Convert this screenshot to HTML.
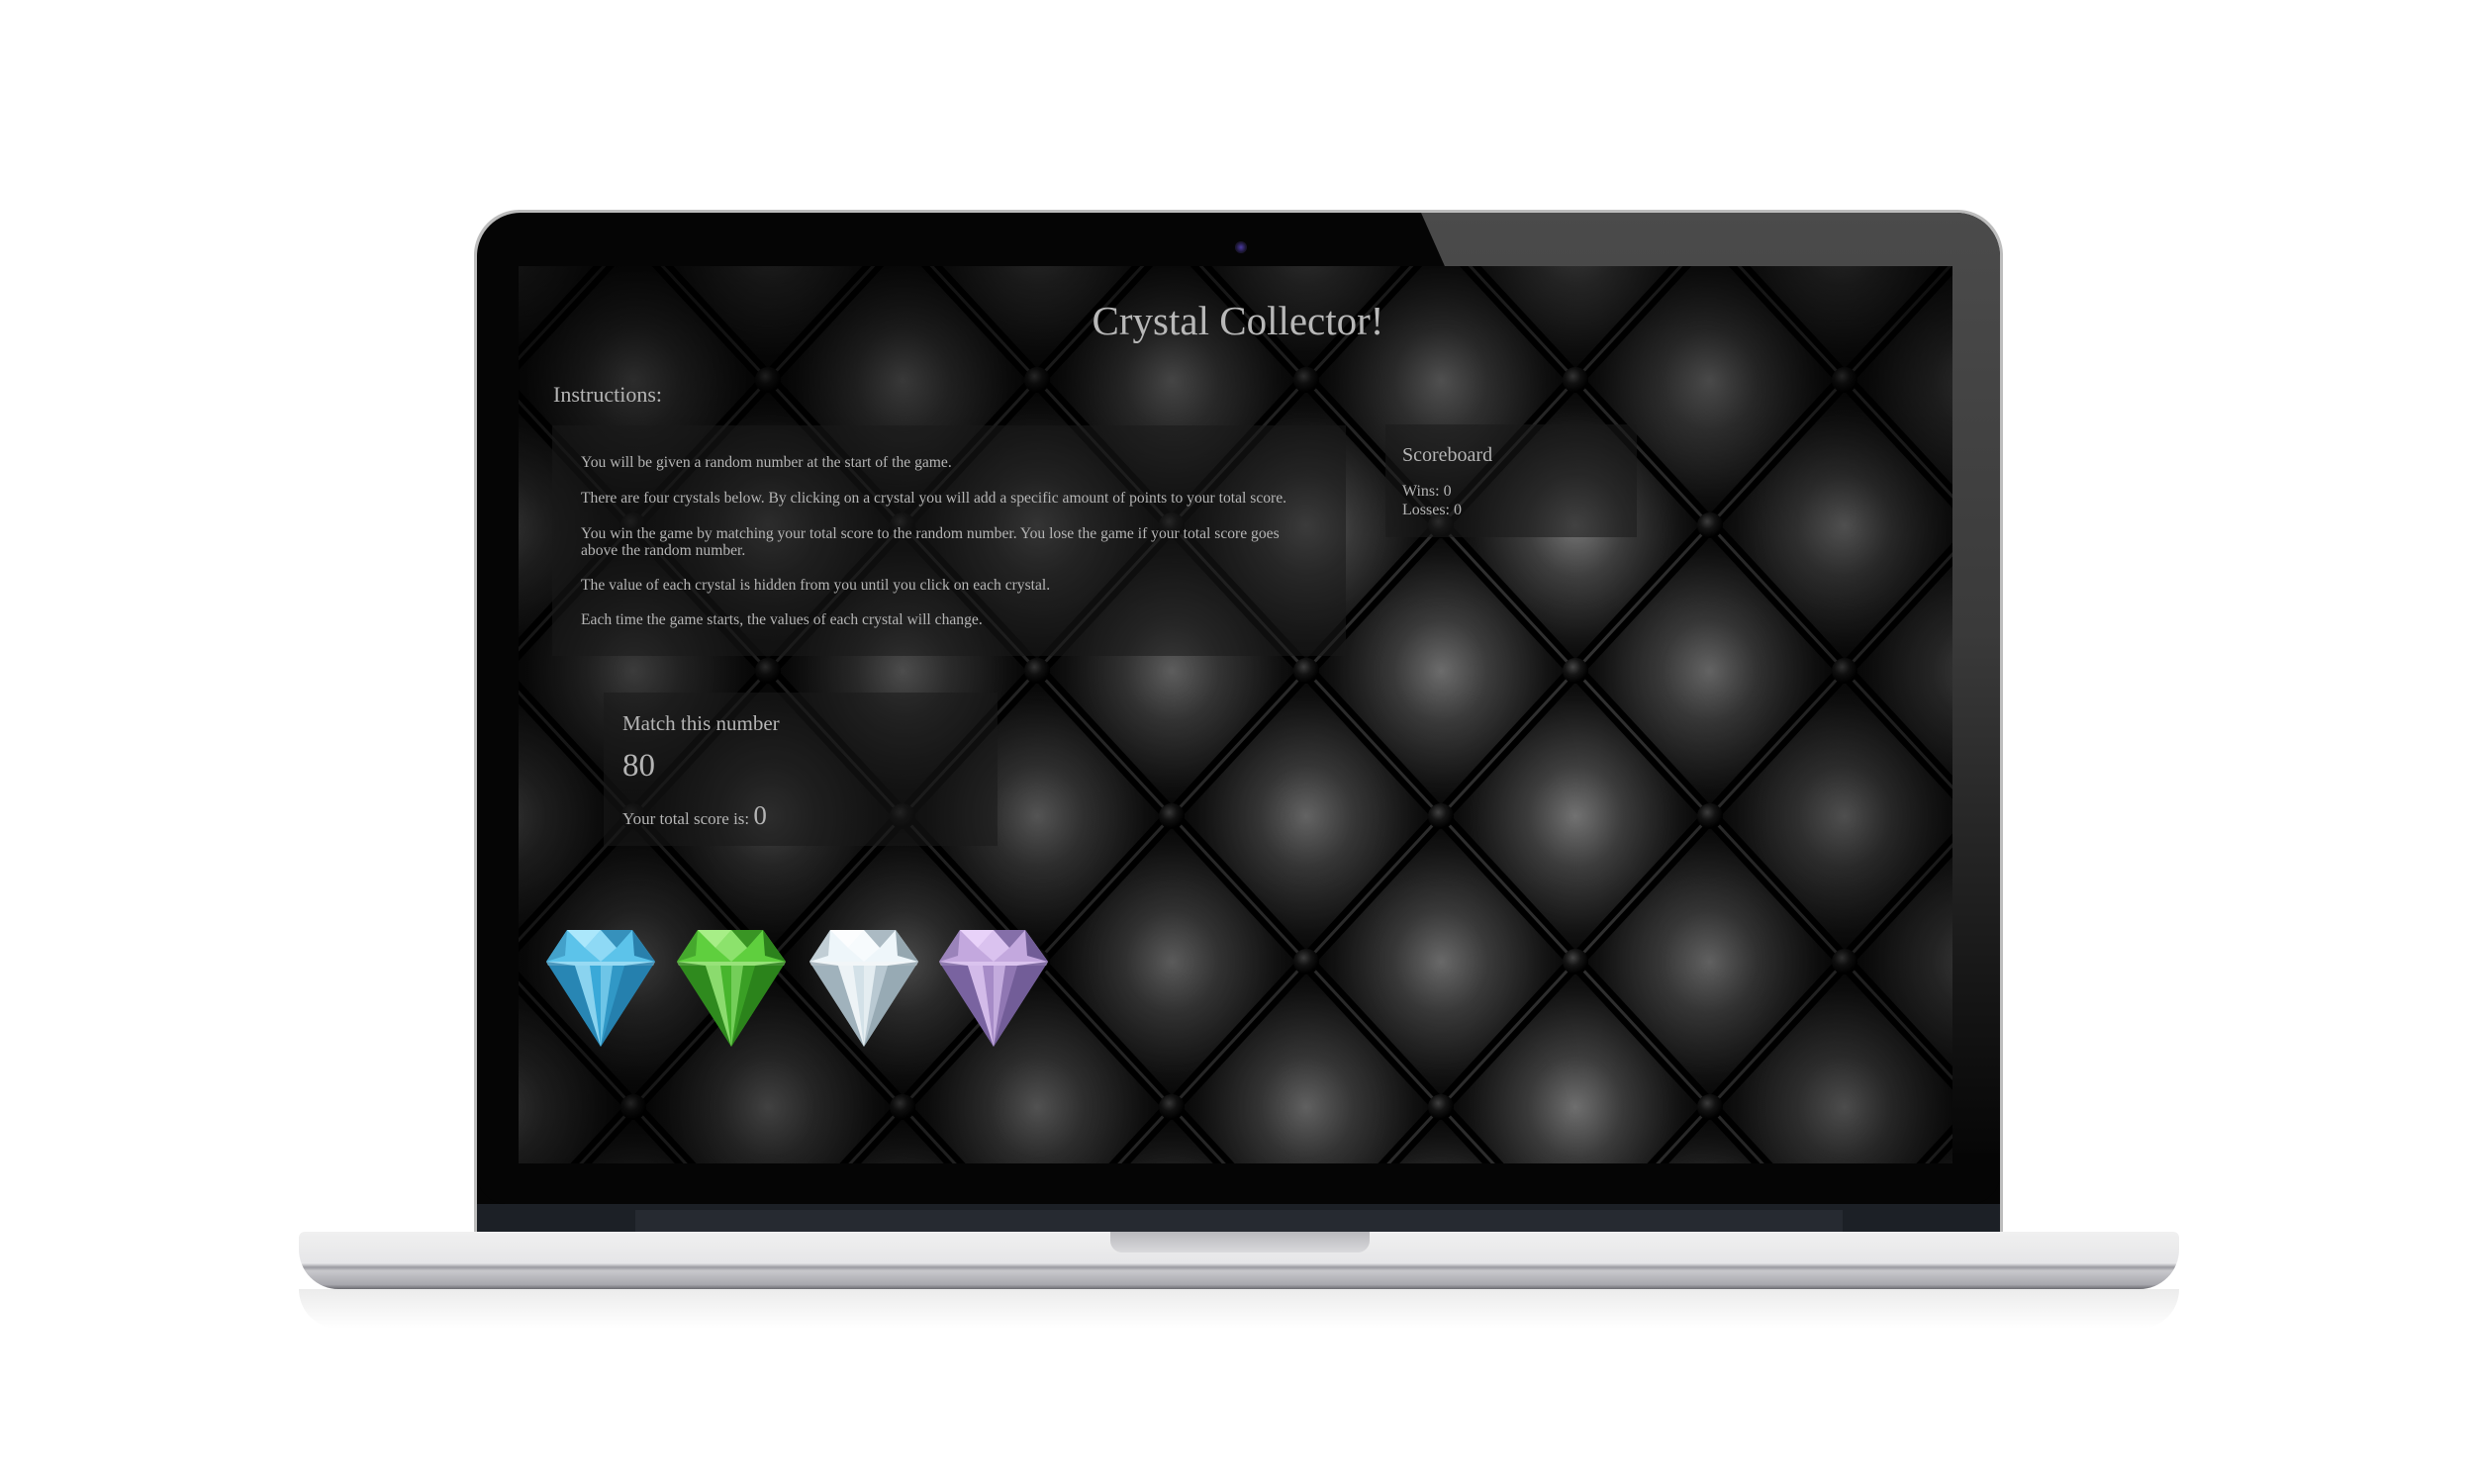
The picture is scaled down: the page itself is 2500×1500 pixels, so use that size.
<!DOCTYPE html>
<html><head><meta charset="utf-8"><style>
html,body{margin:0;padding:0;background:#fff;}
body{width:2500px;height:1500px;position:relative;overflow:hidden;font-family:"Liberation Serif",serif;}
.abs{position:absolute;}
.box{position:absolute;background:rgba(25,25,25,0.55);}
.t{color:#b4b4b4;position:absolute;white-space:nowrap;}
</style></head><body>

<!-- reflection -->
<div class="abs" style="left:302px;top:1303px;width:1900px;height:40px;background:linear-gradient(#d8d8d8,rgba(255,255,255,0));opacity:.5;border-radius:0 0 40px 40px"></div>

<!-- lid -->
<div class="abs" style="left:479px;top:212px;width:1545px;height:1060px;border-radius:46px 46px 0 0;background:#bdbdbd;"></div>
<div class="abs" style="left:482px;top:215px;width:1539px;height:1060px;border-radius:44px 44px 0 0;background:#050505;overflow:hidden;">
  <div class="abs" style="left:0;top:0;width:1539px;height:1060px;background:linear-gradient(#4b4b4b 0,#3a3a3a 40%,#151515 75%,#060606 90%);clip-path:polygon(954px 0,1539px 0,1539px 962px,1380px 962px)"></div>
  <div class="abs" style="left:0;top:1002px;width:1539px;height:60px;background:#1c2026"></div>
  <div class="abs" style="left:0;top:950px;width:1539px;height:52px;background:#050505;border-radius:0 0 30px 30px"></div>
  <div class="abs" style="left:160px;top:1008px;width:1220px;height:60px;background:#262a31"></div>
</div>
<!-- camera -->
<div class="abs" style="left:1248px;top:244px;width:12px;height:12px;border-radius:50%;background:radial-gradient(circle at 50% 50%,#4a3aa0 0,#1a1530 60%,#222 100%)"></div>

<!-- screen -->
<div class="abs" style="left:524px;top:269px;width:1449px;height:907px;overflow:hidden;background:#111;">
<svg width="1449" height="907" style="position:absolute;left:0;top:0">
<defs>
<radialGradient id="cg" cx="50%" cy="50%" r="50%">
<stop offset="0" stop-color="#8a8a8a"/><stop offset="0.35" stop-color="#4a4a4a"/><stop offset="0.8" stop-color="#161616"/><stop offset="1" stop-color="#060606"/>
</radialGradient>
<radialGradient id="bt" cx="40%" cy="35%" r="60%">
<stop offset="0" stop-color="#555"/><stop offset="0.5" stop-color="#1a1a1a"/><stop offset="1" stop-color="#000"/>
</radialGradient>
<pattern id="up" patternUnits="userSpaceOnUse" x="252" y="115" width="272" height="294">
<rect width="272" height="294" fill="#0a0a0a"/>
<polygon points="136,-147 272,0 136,147 0,0" fill="url(#cg)"/>
<polygon points="0,0 136,147 0,294 -136,147" fill="url(#cg)"/>
<polygon points="272,0 408,147 272,294 136,147" fill="url(#cg)"/>
<polygon points="136,147 272,294 136,441 0,294" fill="url(#cg)"/>
<g stroke="#000" stroke-width="16" fill="none">
<line x1="-20" y1="-21.6" x2="292" y2="315.6"/><line x1="292" y1="-21.6" x2="-20" y2="315.6"/>
<line x1="116" y1="-168.6" x2="428" y2="168.6"/><line x1="-156" y1="125.4" x2="156" y2="462.6"/>
<line x1="156" y1="-168.6" x2="-156" y2="168.6"/><line x1="428" y1="125.4" x2="116" y2="462.6"/>
</g>
<g stroke="#3a3a3a" stroke-width="3" fill="none">
<line x1="-20" y1="-21.6" x2="292" y2="315.6"/><line x1="292" y1="-21.6" x2="-20" y2="315.6"/>
<line x1="116" y1="-168.6" x2="428" y2="168.6"/><line x1="-156" y1="125.4" x2="156" y2="462.6"/>
<line x1="156" y1="-168.6" x2="-156" y2="168.6"/><line x1="428" y1="125.4" x2="116" y2="462.6"/>
</g>
<g fill="url(#bt)">
<circle cx="0" cy="0" r="13"/><circle cx="272" cy="0" r="13"/><circle cx="136" cy="147" r="13"/><circle cx="0" cy="294" r="13"/><circle cx="272" cy="294" r="13"/>
</g>
</pattern>
<linearGradient id="shadeL" x1="0" y1="0" x2="1" y2="0">
<stop offset="0" stop-color="#000" stop-opacity=".55"/><stop offset="0.45" stop-color="#000" stop-opacity=".2"/><stop offset="0.75" stop-color="#000" stop-opacity="0"/><stop offset="1" stop-color="#000" stop-opacity=".45"/>
</linearGradient>
<linearGradient id="shadeT" x1="0" y1="0" x2="0" y2="1">
<stop offset="0" stop-color="#000" stop-opacity=".55"/><stop offset="0.3" stop-color="#000" stop-opacity=".15"/><stop offset="1" stop-color="#000" stop-opacity=".2"/>
</linearGradient>
</defs>
<rect width="1449" height="907" fill="url(#up)"/>
<rect width="1449" height="907" fill="url(#shadeL)"/>
<rect width="1449" height="907" fill="url(#shadeT)"/>
</svg>
</div>

<!-- content -->
<div class="t" style="left:0;width:2502px;text-align:center;top:300px;font-size:41px;color:#b8b8b8">Crystal Collector!</div>
<div class="t" style="left:559px;top:386px;font-size:22px;">Instructions:</div>

<div class="box" style="left:558px;top:430px;width:802px;height:233px"></div>
<div class="t" style="left:587px;top:459px;font-size:15.6px;line-height:17px">You will be given a random number at the start of the game.</div>
<div class="t" style="left:587px;top:495px;font-size:15.6px;line-height:17px">There are four crystals below. By clicking on a crystal you will add a specific amount of points to your total score.</div>
<div class="t" style="left:587px;top:531px;font-size:15.6px;line-height:17px">You win the game by matching your total score to the random number. You lose the game if your total score goes<br>above the random number.</div>
<div class="t" style="left:587px;top:583px;font-size:15.6px;line-height:17px">The value of each crystal is hidden from you until you click on each crystal.</div>
<div class="t" style="left:587px;top:618px;font-size:15.6px;line-height:17px">Each time the game starts, the values of each crystal will change.</div>

<div class="box" style="left:1400px;top:429px;width:254px;height:114px"></div>
<div class="t" style="left:1417px;top:449px;font-size:20px;">Scoreboard</div>
<div class="t" style="left:1417px;top:487px;font-size:16px;line-height:19px">Wins: 0<br>Losses: 0</div>

<div class="box" style="left:610px;top:700px;width:398px;height:155px"></div>
<div class="t" style="left:629px;top:719px;font-size:21px;">Match this number</div>
<div class="t" style="left:629px;top:756px;font-size:33px;">80</div>
<div class="t" style="left:629px;top:809px;font-size:17px;">Your total score is: <span style="font-size:27px">0</span></div>

<!-- gems -->
<svg class="abs" style="left:540px;top:930px" width="540" height="140">
<defs>
<g id="gem">
<polygon points="22,10 88,10 111,42 56,128 1,42" fill="var(--m)"/>
<polygon points="22,10 88,10 111,42 1,42" fill="var(--l)"/>
<polygon points="22,10 40,28 56,10" fill="var(--h)" opacity=".8"/>
<polygon points="56,10 72,28 88,10" fill="var(--d)" opacity=".6"/>
<polygon points="40,28 56,10 72,28 56,42" fill="var(--h)" opacity=".5"/>
<polygon points="88,10 111,42 90,36" fill="var(--d)" opacity=".8"/>
<polygon points="1,42 22,10 20,36" fill="var(--d)" opacity=".4"/>
<polygon points="1,42 111,42 109,46 3,46" fill="var(--h)" opacity=".7"/>
<polygon points="1,42 30,46 56,128" fill="var(--d)" opacity=".6"/>
<polygon points="30,46 45,46 56,128" fill="var(--h)" opacity=".6"/>
<polygon points="56,46 68,46 56,128" fill="var(--h)" opacity=".4"/>
<polygon points="80,46 111,42 56,128" fill="var(--d)" opacity=".7"/>
<polygon points="68,46 80,46 56,128" fill="var(--d)" opacity=".3"/>
</g>
</defs>
<use href="#gem" x="11" y="0" style="--m:#3aa9d8;--l:#5cc3ea;--h:#bff0ff;--d:#1d6f9c"/>
<use href="#gem" x="143" y="0" style="--m:#47b52d;--l:#5fcf3e;--h:#b9f59a;--d:#1f6e14"/>
<use href="#gem" x="277" y="0" style="--m:#d3e1e8;--l:#eef6fa;--h:#ffffff;--d:#7e939e"/>
<use href="#gem" x="408" y="0" style="--m:#a68bc7;--l:#c3a8de;--h:#f1dcff;--d:#5c4a85"/>
</svg>

<!-- base -->
<div class="abs" style="left:302px;top:1245px;width:1900px;height:58px;border-radius:6px 6px 40px 40px;background:linear-gradient(#f0f0f0 0,#e6e6e8 55%,#9a9aa0 62%,#c8c8cc 68%,#a8a8ae 92%,#6a6a70 100%);"></div>
<div class="abs" style="left:1122px;top:1245px;width:262px;height:21px;border-radius:0 0 12px 12px;background:linear-gradient(#b8b8bc,#d9d9dc);"></div>

</body></html>
